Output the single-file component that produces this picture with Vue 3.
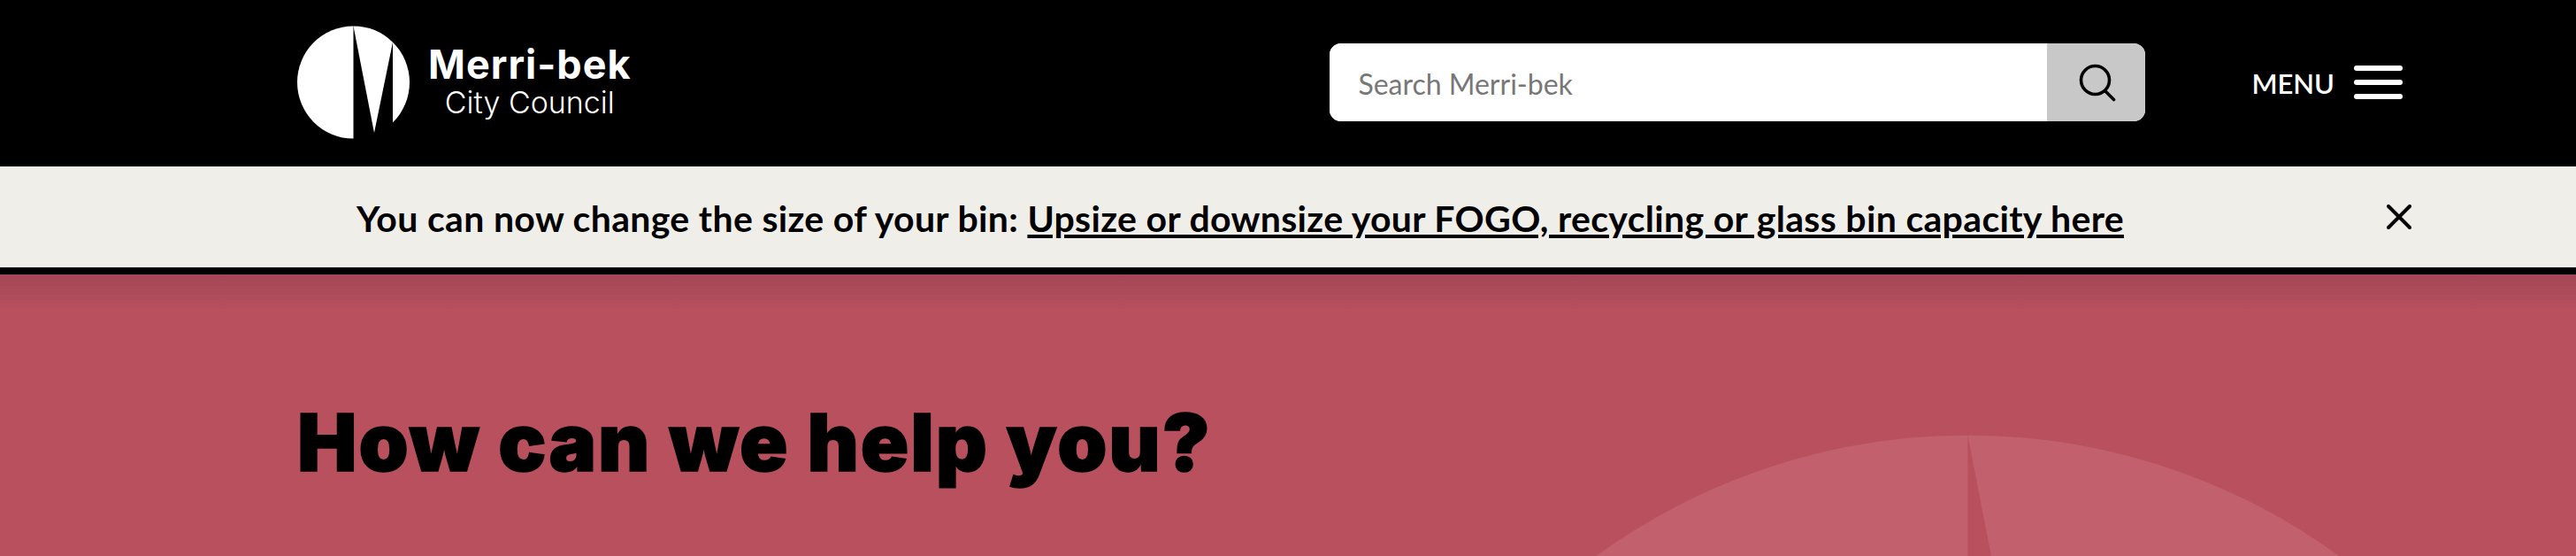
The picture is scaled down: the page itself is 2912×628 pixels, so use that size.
<template>
  <div class="page">
    <header class="topbar">
      <a class="brand" href="#">
        <svg class="brand-mark" viewBox="0 0 128 128" aria-hidden="true">
          <path d="M63.5 0.5A63.5 63.5 0 0 0 63.5 127.5Z" fill="#fff" />
          <path d="M63.5 0.5A63.5 63.5 0 0 1 108 18.7L87 121Z" fill="#fff" />
          <path d="M108 18.7A63.5 63.5 0 0 1 108 109.3Z" fill="#fff" />
        </svg>
        <span class="brand-text">
          <span class="brand-name">Merri-bek</span>
          <span class="brand-sub">City Council</span>
        </span>
      </a>
      <form class="search" @submit.prevent>
        <input class="search-input" type="text" placeholder="Search Merri-bek" />
        <button class="search-btn" type="button" aria-label="Search">
          <svg viewBox="0 0 44 44" width="44" height="44" fill="none" stroke="#000" stroke-width="3.6">
            <circle cx="20.5" cy="19.5" r="16" />
            <path d="M32 32l9.5 9.5" stroke-linecap="round" />
          </svg>
        </button>
      </form>
      <button class="menu" type="button">
        <span class="menu-label">MENU</span>
        <span class="burger"><i></i><i></i><i></i></span>
      </button>
    </header>

    <div class="notice">
      <p class="notice-text">
        You can now change the size of your bin:
        <a href="#">Upsize or downsize your FOGO, recycling or glass bin capacity here</a>
      </p>
      <button class="notice-close" type="button" aria-label="Close">
        <svg viewBox="0 0 28 28" width="28" height="28" stroke="#000" stroke-width="4" stroke-linecap="round">
          <path d="M2 2l24 24M26 2L2 26" />
        </svg>
      </button>
    </div>

    <main class="hero">
      <svg class="hero-mark" viewBox="0 0 128 128" aria-hidden="true">
        <path d="M63.5 0.5A63.5 63.5 0 0 0 63.5 127.5Z" />
        <path d="M63.5 0.5A63.5 63.5 0 0 1 108 18.7L87 121Z" />
        <path d="M108 18.7A63.5 63.5 0 0 1 108 109.3Z" />
      </svg>
      <h1>How can we help you?</h1>
    </main>
  </div>
</template>

<script setup>
</script>

<style>
html,
body {
  margin: 0;
  background: #b8505e;
}
</style>

<style scoped>
.page {
  width: 2912px;
  height: 628px;
  overflow: hidden;
  font-family: "Lato", "Open Sans", sans-serif;
  display: flex;
  flex-direction: column;
}

.topbar {
  height: 188px;
  flex: none;
  background: #000;
  display: flex;
  align-items: center;
  padding: 0 196px 2px 336px;
  box-sizing: border-box;
}

.brand {
  display: flex;
  align-items: center;
  gap: 20px;
  color: #fff;
  text-decoration: none;
  margin: 0 auto 1px 0;
}

.brand-mark {
  width: 128px;
  height: 128px;
}

.brand-text {
  display: flex;
  flex-direction: column;
  align-items: center;
  margin-bottom: 3px;
}

.brand-name {
  font-family: "Inter", sans-serif;
  font-weight: 700;
  font-size: 45px;
  line-height: 50px;
  letter-spacing: 1px;
}

.brand-sub {
  font-family: "Inter", sans-serif;
  font-weight: 300;
  font-size: 34px;
  line-height: 36px;
}

.search {
  display: flex;
  width: 922px;
  height: 88px;
  border-radius: 13px;
  overflow: hidden;
  background: #fff;
  margin-right: 120px;
}

.search-input {
  flex: 1;
  min-width: 0;
  border: 0;
  outline: 0;
  padding: 2px 0 0 32px;
  font: 400 32px "Lato", sans-serif;
  color: #000;
}

.search-input::placeholder {
  color: #777;
  opacity: 1;
}

.search-btn {
  width: 111px;
  border: 0;
  padding: 0;
  background: #c8c8c8;
  display: flex;
  align-items: center;
  justify-content: center;
}

.menu {
  display: flex;
  align-items: center;
  gap: 22px;
  border: 0;
  padding: 0;
  background: none;
  color: #fff;
  font: 600 31px "Lato", sans-serif;
}

.menu-label {
  padding-top: 2px;
}

.burger {
  display: flex;
  flex-direction: column;
  gap: 10px;
  width: 55px;
}

.burger i {
  display: block;
  height: 6px;
  border-radius: 3px;
  background: #fff;
}

.notice {
  height: 122px;
  flex: none;
  box-sizing: border-box;
  background: #f0eee9;
  border-bottom: 8px solid #000;
  padding: 2px 108px 0 0;
  display: flex;
  align-items: center;
  justify-content: center;
  position: relative;
}

.notice-text {
  margin: 0;
  font-size: 41px;
  font-weight: 700;
  letter-spacing: 0.33px;
  color: #000;
}

.notice-text a {
  color: inherit;
}

.notice-close {
  position: absolute;
  left: 2698px;
  top: 43px;
  border: 0;
  padding: 0;
  background: none;
  line-height: 0;
}

.hero {
  flex: 1;
  position: relative;
  overflow: hidden;
  background: linear-gradient(#a34656 0, #b8505e 40px, #b8505e 100%);
  padding: 145px 0 0 336px;
}

.hero h1 {
  position: relative;
  margin: 0;
  font-family: "Inter", sans-serif;
  font-weight: 900;
  font-size: 90px;
  line-height: 90px;
  letter-spacing: 1.9px;
  -webkit-text-stroke: 1.5px #000;
  color: #000;
}

.hero-mark {
  position: absolute;
  left: 1510px;
  top: 176px;
  width: 1440px;
  height: 1440px;
  fill: #c2616d;
}
</style>
